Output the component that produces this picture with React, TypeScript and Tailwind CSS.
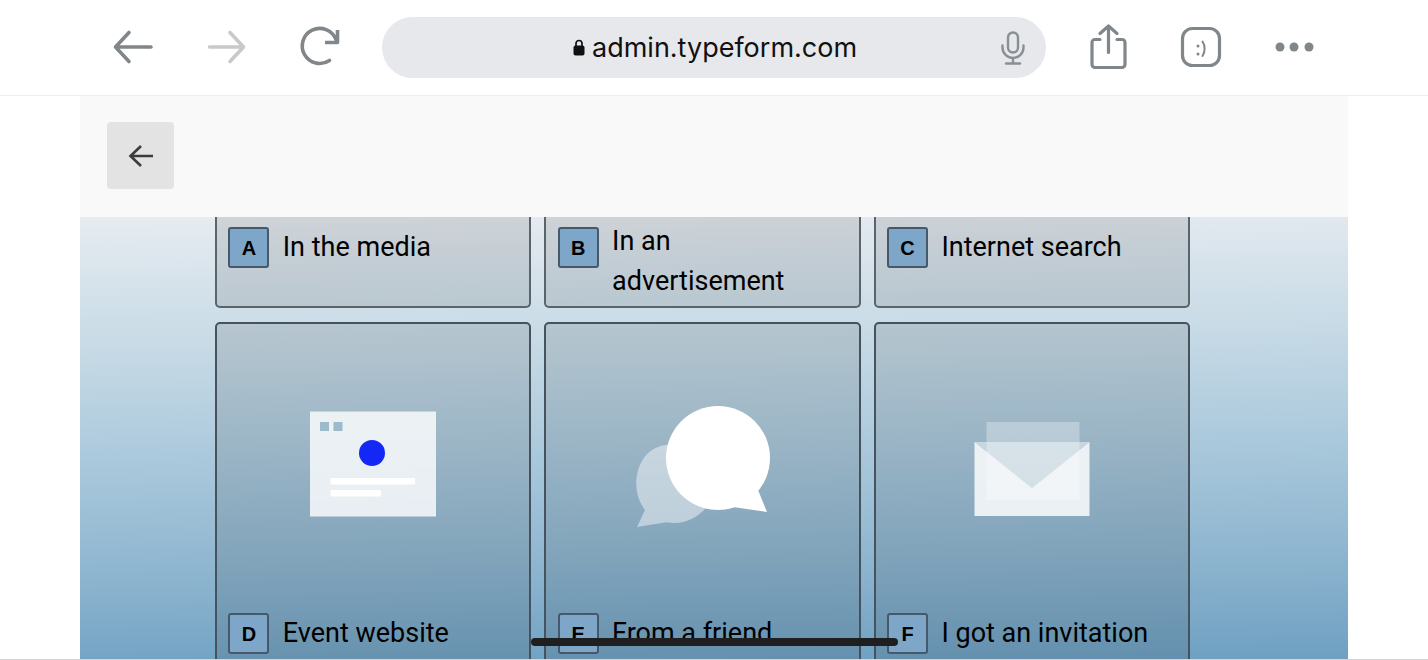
const ICON_STROKE = "#80868a";

function BackIcon({ color = ICON_STROKE }: { color?: string }) {
  return (
    <svg width="48" height="48" viewBox="0 0 48 48" fill="none" stroke={color} strokeWidth="3.6" strokeLinecap="round" strokeLinejoin="round">
      <path d="M42 24H7M20 9.500 6.500 24 20 38.500" />
    </svg>
  );
}

function ForwardIcon() {
  return (
    <svg width="48" height="48" viewBox="0 0 48 48" fill="none" stroke="#c9c9c9" strokeWidth="3.6" strokeLinecap="round" strokeLinejoin="round">
      <path d="M7.500 24H41.500M28 9.500 41.500 24 28 38.500" />
    </svg>
  );
}

function ReloadIcon() {
  return (
    <svg width="48" height="48" viewBox="0 0 48 48" fill="none" stroke={ICON_STROKE} strokeWidth="3.6" strokeLinecap="round" strokeLinejoin="round">
      <path d="M33.500 37.500A17.500 17.500 0 1 1 40 16.500" />
      <path d="M41.500 7v12.500H29" strokeLinecap="butt" />
    </svg>
  );
}

function ShareIcon() {
  return (
    <svg width="48" height="48" viewBox="0 0 48 48" fill="none" stroke={ICON_STROKE} strokeWidth="3.2" strokeLinecap="round" strokeLinejoin="round">
      <path d="M16 16.500h-5a3 3 0 0 0-3 3V41.500a3 3 0 0 0 3 3h27a3 3 0 0 0 3-3V19.500a3 3 0 0 0-3-3H33" />
      <path d="M24.500 29.500V3.500M16 10.500 24.500 3l8.500 7.500" />
    </svg>
  );
}

function ReaderIcon() {
  return (
    <svg width="48" height="48" viewBox="0 0 48 48" fill="none">
      <rect x="5.500" y="5.500" width="37" height="37" rx="10" stroke={ICON_STROKE} strokeWidth="3.200" />
      <circle cx="21" cy="23" r="1.500" fill={ICON_STROKE} />
      <circle cx="21" cy="31" r="1.500" fill={ICON_STROKE} />
      <path d="M25.500 18.500c2.800 4 2.800 10.500 0 14.500" stroke={ICON_STROKE} strokeWidth="2" strokeLinecap="round" />
    </svg>
  );
}

function DotsIcon() {
  return (
    <svg width="48" height="48" viewBox="0 0 48 48" fill={ICON_STROKE}>
      <circle cx="10" cy="24" r="4.500" />
      <circle cx="24" cy="24" r="4.500" />
      <circle cx="39" cy="24" r="4.500" />
    </svg>
  );
}

function LockIcon() {
  return (
    <svg width="12" height="17" viewBox="0 0 12 17" fill="none">
      <path d="M3 7V4.500a3 3 0 0 1 6 0V7" stroke="#111" strokeWidth="1.700" />
      <rect x="0.500" y="6.500" width="11" height="10" rx="2" fill="#111" />
    </svg>
  );
}

function MicIcon() {
  return (
    <svg width="24" height="34" viewBox="0 0 24 34" fill="none" stroke="#8a8f93" strokeWidth="2.400" strokeLinecap="round">
      <rect x="7" y="1.500" width="10" height="20" rx="5" />
      <path d="M1.500 14.500v2a10.500 10.500 0 0 0 21 0v-2M12 27v5M5 32.500h14" />
    </svg>
  );
}

function EventArt() {
  return (
    <svg width="180" height="140" viewBox="0 0 180 140">
      <rect x="27" y="18.500" width="126" height="105" fill="#fff" fillOpacity="0.8" />
      <rect x="37" y="29" width="9" height="9" fill="#9dbacb" />
      <rect x="50.500" y="29" width="9" height="9" fill="#9dbacb" />
      <circle cx="89" cy="60" r="13" fill="#1428f5" />
      <rect x="47.500" y="85" width="84.500" height="6.500" fill="#fff" />
      <rect x="47.500" y="97" width="50.500" height="6.500" fill="#fff" />
    </svg>
  );
}

function FriendArt() {
  return (
    <svg width="180" height="140" viewBox="0 0 180 140" fill="#fff">
      <g opacity="0.45">
        <path d="M33 117C17 97 24 62 46 54 70 44 104 62 104 90 104 114 80 130 64 130 58 130 54 129 50 130L25 134Z" />
      </g>
      <circle cx="106" cy="65" r="52" />
      <path d="M146 97 155 119 121 114Z" />
    </svg>
  );
}

function InviteArt() {
  return (
    <svg width="180" height="140" viewBox="0 0 180 140" fill="#fff">
      <rect x="44.500" y="29" width="93" height="78" fillOpacity="0.3" />
      <path d="M32.500 49H147.500L90 95Z" fillOpacity="0.45" />
      <path d="M32.500 49 90 95 147.500 49V123H32.500Z" fillOpacity="0.82" />
    </svg>
  );
}

function KeyHint({ letter }: { letter: string }) {
  return (
    <span className="flex h-[41px] w-[41px] shrink-0 items-center justify-center rounded-[3px] border-2 border-[#46596a] bg-[#7ea6c8] font-['Liberation_Sans',sans-serif] text-[20px] font-bold leading-none text-black">
      {letter}
    </span>
  );
}

const TOP_CHOICES = [
  { letter: "A", label: "In the media", textClass: "mt-0" },
  { letter: "B", label: "In an advertisement", textClass: "-mt-[6px]" },
  { letter: "C", label: "Internet search", textClass: "mt-0" },
];

const ART_CHOICES = [
  { letter: "D", label: "Event website", art: <EventArt /> },
  { letter: "E", label: "From a friend", art: <FriendArt /> },
  { letter: "F", label: "I got an invitation", art: <InviteArt /> },
];

export default function App() {
  return (
    <div className="relative h-[660px] w-[1428px] overflow-hidden border-b border-[#d4d4d4] bg-white font-['Roboto',sans-serif]">
      <div className="flex h-[96px] items-start border-b border-[#efefef] pl-[109px] pt-[23px]">
        <BackIcon />
        <div className="ml-[45px]">
          <ForwardIcon />
        </div>
        <div className="ml-[46px]">
          <ReloadIcon />
        </div>
        <div className="-mt-[6px] ml-[38px] flex h-[61px] w-[664px] items-center rounded-full bg-[#e7e8ec] pl-[191px] pr-[21px]">
          <LockIcon />
          <span className="-mt-[1px] ml-[7px] font-['Inter',sans-serif] text-[27px] leading-none text-[#111]">
            admin.typeform.com
          </span>
          <span className="ml-auto">
            <MicIcon />
          </span>
        </div>
        <div className="ml-[38px]">
          <ShareIcon />
        </div>
        <div className="ml-[45px]">
          <ReaderIcon />
        </div>
        <div className="ml-[45px]">
          <DotsIcon />
        </div>
      </div>

      <div className="mx-[80px] flex h-[564px] flex-col">
        <div className="flex h-[121px] shrink-0 items-start bg-[#f9f9f9] pl-[27px] pt-[26px]">
          <button type="button" className="flex h-[67px] w-[67px] items-center justify-center rounded-[4px] bg-[#e3e3e3]">
            <svg width="26" height="24" viewBox="0 0 26 24" fill="none" stroke="#3b3b3b" strokeWidth="2.600">
              <path d="M25 12H3M13 2 2.500 12 13 22" />
            </svg>
          </button>
        </div>

        <div className="flex-1 overflow-hidden bg-[linear-gradient(179deg,#e7ecf1_0%,#d3e1ea_17%,#c5d9e5_30%,#abc9dc_52%,#8fb6d0_76%,#6ea0c2_100%)] pl-[135px]">
          <div className="grid w-[975px] grid-cols-3 gap-x-[13px] gap-y-[14px]">
            {TOP_CHOICES.map((choice) => (
              <div
                key={choice.letter}
                className="flex h-[91px] items-start gap-[13.4px] rounded-b-[5px] border-2 border-t-0 border-[#5a646b] bg-black/10 pl-[11.4px] pr-[40px] pt-[10px]"
              >
                <KeyHint letter={choice.letter} />
                <span className={`${choice.textClass} text-[27px] leading-[40px] text-black`}>{choice.label}</span>
              </div>
            ))}
            {ART_CHOICES.map((choice) => (
              <div key={choice.letter} className="h-[360px] rounded-[5px] border-2 border-[#46535c] bg-black/10">
                <div className="flex h-[289px] items-start justify-center pt-[69px]">{choice.art}</div>
                <div className="flex items-start gap-[13.4px] pl-[11.4px]">
                  <KeyHint letter={choice.letter} />
                  <span className="text-[27px] leading-[40px] text-black">{choice.label}</span>
                </div>
              </div>
            ))}
          </div>
        </div>
      </div>

      <div className="absolute left-[531px] top-[638px] h-[8px] w-[367px] rounded-full bg-[#1f1f1f]" />
    </div>
  );
}
